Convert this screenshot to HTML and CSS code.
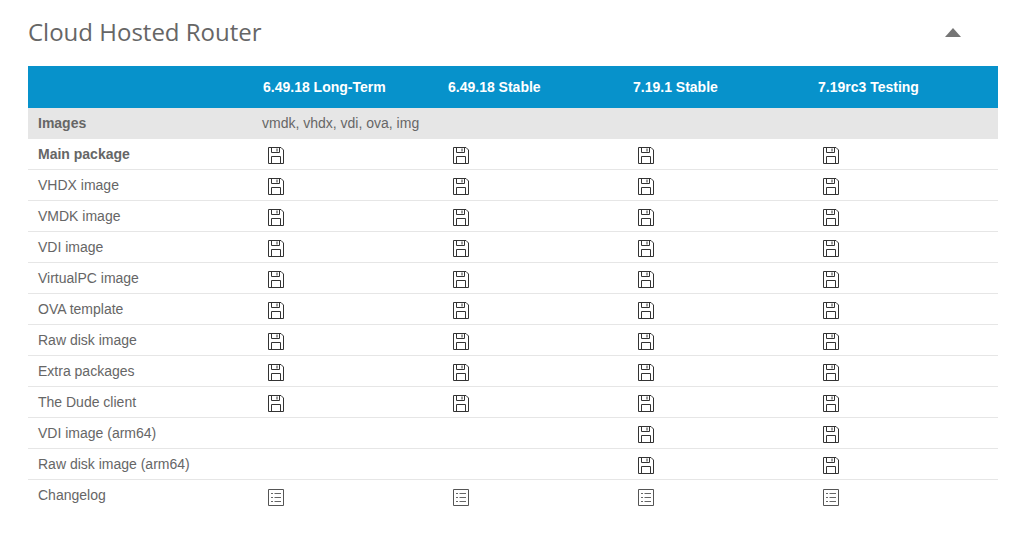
FILE: index.html
```html
<!DOCTYPE html>
<html lang="en">
<head>
<meta charset="utf-8">
<title>Cloud Hosted Router</title>
<link rel="stylesheet" href="styles.css">
</head>
<body>
<svg class="defs" width="0" height="0" aria-hidden="true">
  <symbol id="save" viewBox="0 0 16 17">
    <path d="M.5.5H13L15.5 3V16.5H.5Z" fill="none" stroke="#333"/>
    <path d="M3.5.5V5.5H11.5V.5M9 1.5V4.5M3.5 16.5V9.5H12.5V16.5" fill="none" stroke="#333"/>
  </symbol>
  <symbol id="list" viewBox="0 0 16 17">
    <path d="M.5.5H15.5V16.5H.5Z" fill="none" stroke="#555"/>
    <path d="M3 4.5H5M6.5 4.5H13M3 8.5H5M6.5 8.5H13M3 12.5H5M6.5 12.5H13" fill="none" stroke="#666"/>
  </symbol>
</svg>
<main class="section">
  <header class="head">
    <h2 class="title">Cloud Hosted Router</h2>
    <span class="caret"></span>
  </header>
  <table class="table">
    <thead>
      <tr><th></th><th>6.49.18 Long-Term</th><th>6.49.18 Stable</th><th>7.19.1 Stable</th><th>7.19rc3 Testing</th></tr>
    </thead>
    <tbody>
      <tr class="group"><td>Images</td><td colspan="4">vmdk, vhdx, vdi, ova, img</td></tr>
      <tr class="strong"><td>Main package</td><td><svg class="ico"><use href="#save"/></svg></td><td><svg class="ico"><use href="#save"/></svg></td><td><svg class="ico"><use href="#save"/></svg></td><td><svg class="ico"><use href="#save"/></svg></td></tr>
      <tr><td>VHDX image</td><td><svg class="ico"><use href="#save"/></svg></td><td><svg class="ico"><use href="#save"/></svg></td><td><svg class="ico"><use href="#save"/></svg></td><td><svg class="ico"><use href="#save"/></svg></td></tr>
      <tr><td>VMDK image</td><td><svg class="ico"><use href="#save"/></svg></td><td><svg class="ico"><use href="#save"/></svg></td><td><svg class="ico"><use href="#save"/></svg></td><td><svg class="ico"><use href="#save"/></svg></td></tr>
      <tr><td>VDI image</td><td><svg class="ico"><use href="#save"/></svg></td><td><svg class="ico"><use href="#save"/></svg></td><td><svg class="ico"><use href="#save"/></svg></td><td><svg class="ico"><use href="#save"/></svg></td></tr>
      <tr><td>VirtualPC image</td><td><svg class="ico"><use href="#save"/></svg></td><td><svg class="ico"><use href="#save"/></svg></td><td><svg class="ico"><use href="#save"/></svg></td><td><svg class="ico"><use href="#save"/></svg></td></tr>
      <tr><td>OVA template</td><td><svg class="ico"><use href="#save"/></svg></td><td><svg class="ico"><use href="#save"/></svg></td><td><svg class="ico"><use href="#save"/></svg></td><td><svg class="ico"><use href="#save"/></svg></td></tr>
      <tr><td>Raw disk image</td><td><svg class="ico"><use href="#save"/></svg></td><td><svg class="ico"><use href="#save"/></svg></td><td><svg class="ico"><use href="#save"/></svg></td><td><svg class="ico"><use href="#save"/></svg></td></tr>
      <tr><td>Extra packages</td><td><svg class="ico"><use href="#save"/></svg></td><td><svg class="ico"><use href="#save"/></svg></td><td><svg class="ico"><use href="#save"/></svg></td><td><svg class="ico"><use href="#save"/></svg></td></tr>
      <tr><td>The Dude client</td><td><svg class="ico"><use href="#save"/></svg></td><td><svg class="ico"><use href="#save"/></svg></td><td><svg class="ico"><use href="#save"/></svg></td><td><svg class="ico"><use href="#save"/></svg></td></tr>
      <tr><td>VDI image (arm64)</td><td></td><td></td><td><svg class="ico"><use href="#save"/></svg></td><td><svg class="ico"><use href="#save"/></svg></td></tr>
      <tr><td>Raw disk image (arm64)</td><td></td><td></td><td><svg class="ico"><use href="#save"/></svg></td><td><svg class="ico"><use href="#save"/></svg></td></tr>
      <tr class="log"><td>Changelog</td><td><svg class="ico"><use href="#list"/></svg></td><td><svg class="ico"><use href="#list"/></svg></td><td><svg class="ico"><use href="#list"/></svg></td><td><svg class="ico"><use href="#list"/></svg></td></tr>
    </tbody>
  </table>
</main>
</body>
</html>
```
FILE: styles.css
```css
* { box-sizing: border-box; }
html, body { margin: 0; background: #fff; }
body { font-family: "Liberation Sans", Arial, sans-serif; font-size: 14px; color: #666; }
.defs { position: absolute; }
.section { padding: 14px 29px 0 28px; }
.head { display: flex; align-items: center; justify-content: space-between; height: 36px; margin-bottom: 16px; }
.title { margin: 0; font-family: "Open Sans", sans-serif; font-size: 24px; font-weight: 400; line-height: 36px; color: #666; }
.caret { width: 0; height: 0; margin-right: 37px; border-left: 8.5px solid transparent; border-right: 8.5px solid transparent; border-bottom: 9px solid #757575; }
.table { width: 970px; border-collapse: separate; border-spacing: 0; table-layout: fixed; }
.table th:nth-child(1) { width: 225px; }
.table th:nth-child(2), .table th:nth-child(3), .table th:nth-child(4) { width: 185px; }
.table th { height: 42px; padding: 0 10px; background: #0792cb; color: #fff; font-weight: 700; text-align: left; }
.table td { height: 31px; padding: 0 10px; border-bottom: 1px solid #e6e6e6; vertical-align: middle; line-height: 30px; }
.table tbody .log td { border-bottom-color: transparent; }
.table td:not(:first-child) { padding-left: 15px; }
.group td { background: #e6e6e6; }
.group td:first-child, .strong td:first-child { font-weight: 700; }
.group td:last-child { padding-left: 9px !important; }
.ico { display: block; width: 16px; height: 17px; margin-top: 3px; }
.log .ico { margin-top: 5px; }
```
